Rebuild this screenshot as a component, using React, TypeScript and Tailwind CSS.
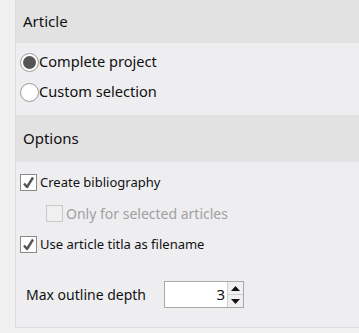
import React from "react";

const font = { fontFamily: '"Noto Sans", "Open Sans", sans-serif' };

function Radio({ checked, label }: { checked?: boolean; label: string }) {
  return (
    <div className="flex items-center h-[30px]">
      <div className="ml-[19px] w-[19px] h-[19px] rounded-full border border-[#9a9a9a] bg-white flex items-center justify-center">
        {checked && <div className="w-[13px] h-[13px] rounded-full bg-[#555]" />}
      </div>
      <span className="ml-[0px] text-[14.6px] text-[#111]">{label}</span>
    </div>
  );
}

function Check({ checked, label, disabled, indent }: { checked?: boolean; label: string; disabled?: boolean; indent?: boolean }) {
  return (
    <div className={"flex items-center h-[31px] " + (indent ? "pl-[45px]" : "pl-[19px]")}>
      <div className={"w-[17px] h-[17px] border flex items-center justify-center " + (disabled ? "border-[#c8c8c8] bg-[#f0f0f0]" : "border-[#8a8a8a] bg-white")}>
        {checked && (
          <svg width="13" height="13" viewBox="0 0 13 13">
            <path d="M2 7.5 L5 11 L11 1.5" fill="none" stroke="#555" strokeWidth="2.4" strokeLinejoin="round" />
          </svg>
        )}
      </div>
      <span className={"ml-[3px] " + (disabled ? "text-[14px] text-[#a0a0a0]" : "text-[13px] text-[#111]")}>{label}</span>
    </div>
  );
}

export default function App() {
  return (
    <div className="w-[359px] h-[333px] bg-[#f0f0f0] pl-[15px]" style={font}>
      <div className="h-[328px] border-l border-b border-[#dcdcdc] bg-[#eeeef0] flex flex-col">
        <div className="h-[43px] bg-[#e2e2e2] flex items-center pl-[7px] text-[15px] text-[#111]">Article</div>
        <div className="pt-[4px] h-[72px] -ml-[15px]">
          <Radio checked label="Complete project" />
          <Radio label="Custom selection" />
        </div>
        <div className="h-[47px] bg-[#e2e2e2] flex items-center pl-[7px] text-[15px] text-[#111]">Options</div>
        <div className="-ml-[15px] pt-[5px]">
          <Check checked label="Create bibliography" />
          <Check disabled indent label="Only for selected articles" />
          <Check checked label="Use article titla as filename" />
        </div>
        <div className="flex items-center mt-[21px] pl-[10px]">
          <span className="text-[14px] text-[#111] w-[138px]">Max outline depth</span>
          <div className="w-[80px] h-[27px] border border-[#a8a8a8] bg-white flex">
            <div className="flex-1 text-right pr-[2px] text-[15px] text-[#111] leading-[25px]">3</div>
            <div className="w-[16px] flex flex-col border-l border-[#d0d0d0] bg-[#f0f0f0]">
              <div className="flex-1 flex items-center justify-center border-b border-[#d0d0d0]">
                <svg width="9" height="5" viewBox="0 0 9 5"><path d="M0 5 L4.5 0 L9 5 Z" fill="#111" /></svg>
              </div>
              <div className="flex-1 flex items-center justify-center">
                <svg width="9" height="5" viewBox="0 0 9 5"><path d="M0 0 L4.5 5 L9 0 Z" fill="#111" /></svg>
              </div>
            </div>
          </div>
        </div>
      </div>
    </div>
  );
}
